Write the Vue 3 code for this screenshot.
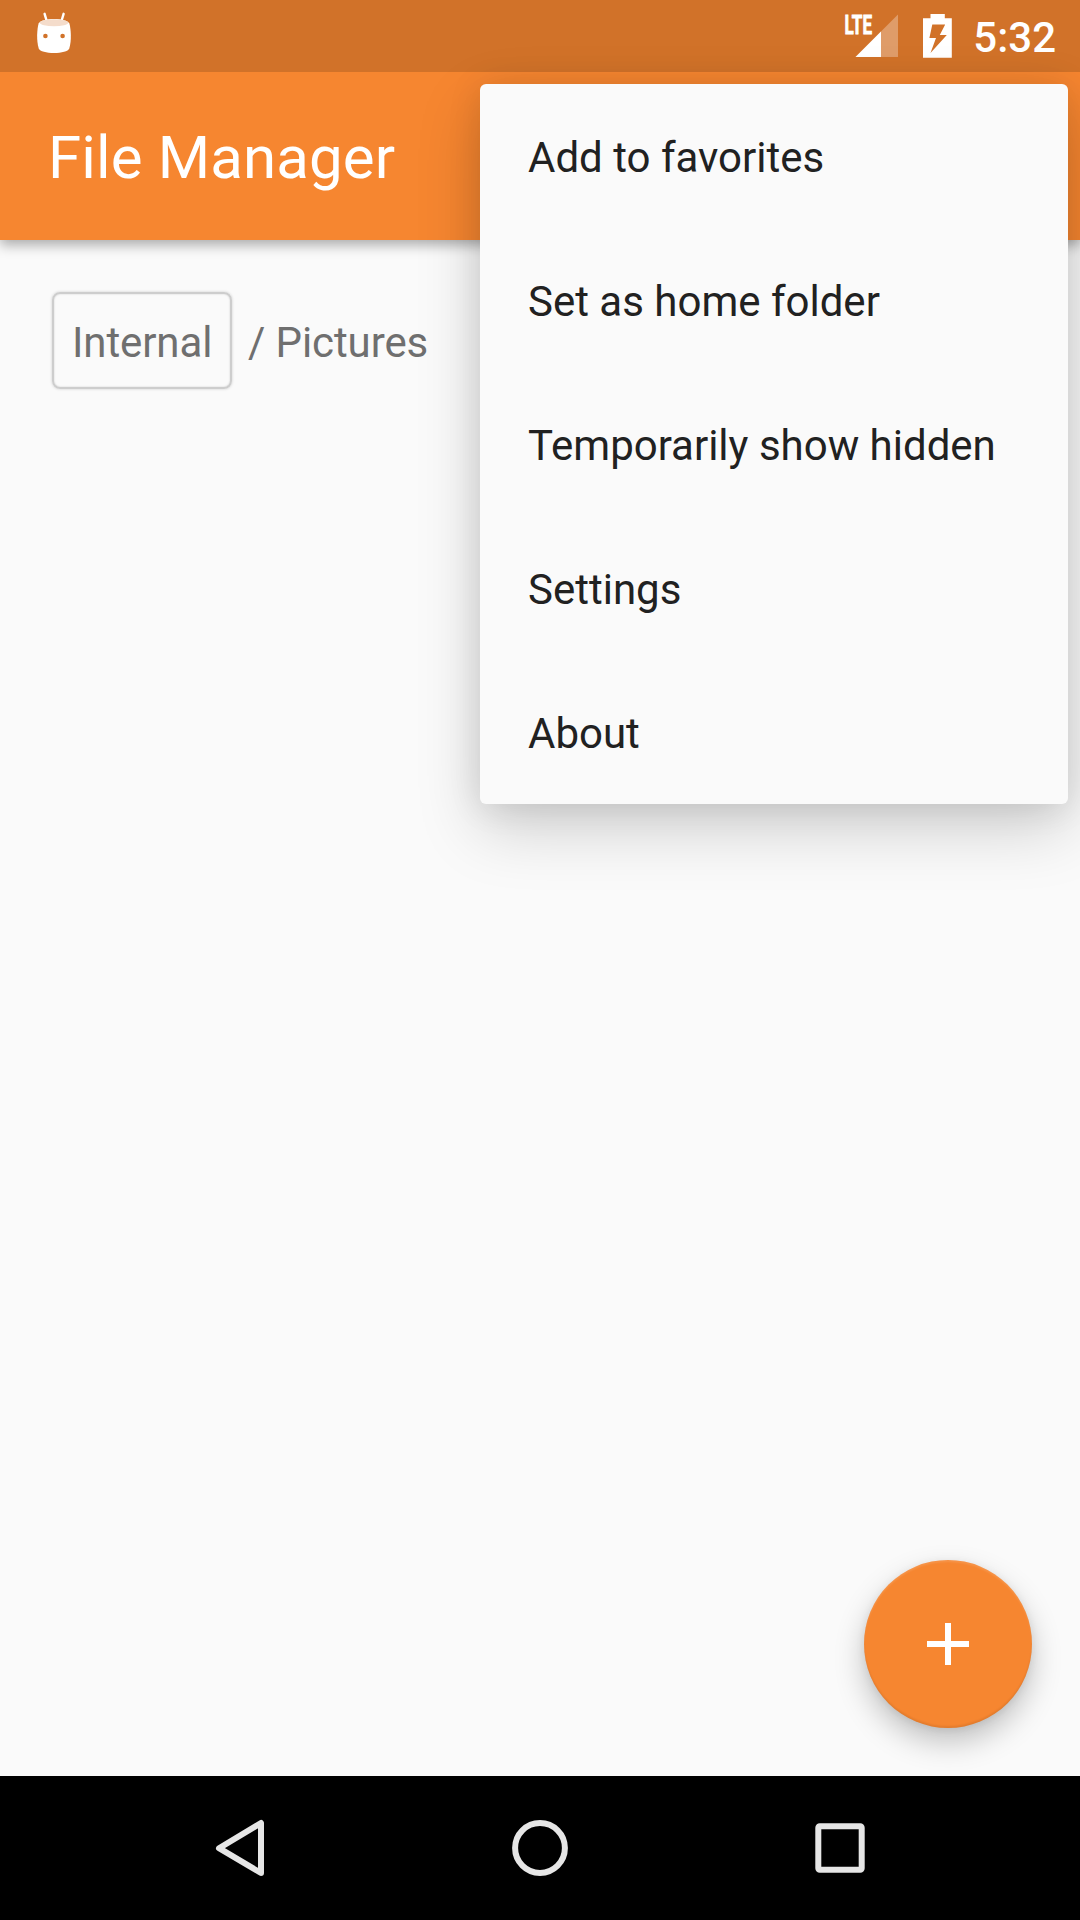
<script setup>
const menuItems = [
  'Add to favorites',
  'Set as home folder',
  'Temporarily show hidden',
  'Settings',
  'About',
]
</script>

<template>
  <div class="screen">
    <header class="status-bar">
      <svg class="marshmallow" width="40" height="44" viewBox="34 11 40 44">
        <path d="M47 22L44.6 13.8M61.2 22L63.6 13.8" stroke="#fff" stroke-width="2.4" stroke-linecap="round" />
        <path d="M38.6 23.5C37 29 36.3 41 38.7 48.3C39.8 51.6 46.5 53 54 53C61.5 53 68.2 51.6 69.3 48.3C71.7 41 71 29 69.4 23.5C68 20.5 61 19 54 19C47 19 40 20.5 38.6 23.5Z" fill="#fff" />
        <ellipse cx="54" cy="22.8" rx="14.2" ry="3.5" fill="#f4dccb" />
        <circle cx="45.4" cy="36" r="2.3" fill="#d17229" />
        <circle cx="62.6" cy="36" r="2.3" fill="#d17229" />
      </svg>
      <div class="indicators">
        <svg class="signal" width="60" height="54" viewBox="840 5 60 54">
          <path d="M898 14.5V57H855.5Z" fill="#fff" fill-opacity=".3" />
          <path d="M881 31.5V57H855.5Z" fill="#fff" />
          <text x="844.5" y="33.8" class="lte" textLength="27.5" lengthAdjust="spacingAndGlyphs">LTE</text>
        </svg>
        <svg class="battery" width="29" height="44" viewBox="923 14 29 44">
          <path d="M930.5 14H944.8V18.2H951.8V57.8H923V18.2H930.5ZM932.3 24.5L929.4 38H936L930.5 53L946.8 35H939.8L945.2 24.5Z" fill="#fff" fill-rule="evenodd" />
        </svg>
        <span class="clock">5:32</span>
      </div>
    </header>

    <div class="app-bar">
      <h1 class="title">File Manager</h1>
    </div>

    <main class="content">
      <nav class="breadcrumb">
        <span class="crumb-button">Internal</span>
        <span class="crumb">/ Pictures</span>
      </nav>
      <button class="fab" aria-label="Add">
        <svg width="42" height="42" viewBox="0 0 42 42">
          <path d="M21 0V42M0 21H42" stroke="#fff" stroke-width="6" />
        </svg>
      </button>
    </main>

    <footer class="nav-bar">
      <div class="nav-item">
        <svg width="60" height="60" viewBox="0 0 60 60">
          <path d="M51 5V55L9 30.2Z" class="nav-stroke" />
        </svg>
      </div>
      <div class="nav-item">
        <svg width="60" height="60" viewBox="0 0 60 60">
          <circle cx="30" cy="30" r="24.9" class="nav-stroke" />
        </svg>
      </div>
      <div class="nav-item">
        <svg width="60" height="60" viewBox="0 0 60 60">
          <rect x="8.3" y="8.3" width="43.4" height="43.4" rx="1.5" class="nav-stroke" />
        </svg>
      </div>
    </footer>

    <ul class="menu">
      <li v-for="item in menuItems" :key="item" class="menu-item">{{ item }}</li>
    </ul>
  </div>
</template>

<style>
body {
  margin: 0;
}
</style>

<style scoped>
.screen {
  position: relative;
  display: flex;
  flex-direction: column;
  width: 1080px;
  height: 1920px;
  overflow: hidden;
  background: #fafafa;
  font-family: Roboto, 'Liberation Sans', sans-serif;
}

.status-bar {
  display: flex;
  justify-content: space-between;
  flex: none;
  box-sizing: border-box;
  height: 72px;
  padding: 0 24px 0 34px;
  background: #d17229;
  z-index: 2;
}

.marshmallow {
  margin-top: 11px;
}

.indicators {
  display: flex;
  align-items: flex-start;
}

.signal {
  margin: 5px 23px 0 0;
}

.lte {
  font-size: 25.5px;
  font-weight: 700;
  fill: #fff;
  stroke: #fff;
  stroke-width: 0.8px;
}

.battery {
  margin: 14px 21px 0 0;
}

.clock {
  color: #fff;
  font-size: 42px;
  font-weight: 500;
  line-height: 75px;
}

.app-bar {
  display: flex;
  align-items: center;
  flex: none;
  height: 168px;
  padding-left: 48px;
  background: #f68630;
  box-shadow: 0 5px 12px rgba(0, 0, 0, 0.32);
  z-index: 1;
}

.title {
  margin: 4px 0 0;
  color: #fff;
  font-size: 60px;
  font-weight: 400;
  letter-spacing: 0.12px;
  line-height: 70px;
}

.content {
  position: relative;
  flex: 1;
  padding: 52px 52px 0;
}

.breadcrumb {
  display: flex;
  align-items: flex-start;
  gap: 16px;
  color: #6f6f6f;
  font-size: 42px;
  letter-spacing: -0.1px;
  line-height: 50px;
}

.crumb-button {
  box-sizing: border-box;
  width: 180px;
  height: 97px;
  padding: 24px 0 0 18px;
  border: 2px solid #cdcdcd;
  border-radius: 8px;
  box-shadow: 0 0 3px rgba(0, 0, 0, 0.18), inset 0 0 2px rgba(0, 0, 0, 0.18);
}

.crumb {
  padding-top: 26px;
}

.fab {
  position: absolute;
  right: 48px;
  bottom: 48px;
  display: flex;
  align-items: center;
  justify-content: center;
  width: 168px;
  height: 168px;
  padding: 0;
  border: 0;
  border-radius: 50%;
  background: #f68630;
  box-shadow: 0 14px 30px rgba(0, 0, 0, 0.23), 0 2px 8px rgba(0, 0, 0, 0.08),
    inset 0 -2px 2px rgba(0, 0, 0, 0.08), inset 0 2px 2px rgba(255, 255, 255, 0.12);
}

.nav-bar {
  display: flex;
  flex: none;
  box-sizing: border-box;
  height: 144px;
  padding: 0 90px;
  background: #000;
}

.nav-item {
  display: flex;
  align-items: center;
  justify-content: center;
  flex: 1;
}

.nav-stroke {
  fill: none;
  stroke: #e6e6e6;
  stroke-width: 6;
  stroke-linejoin: round;
}

.menu {
  position: absolute;
  top: 84px;
  right: 12px;
  z-index: 3;
  width: 588px;
  margin: 0;
  padding: 0;
  border-radius: 6px;
  background: #fafafa;
  box-shadow: 0 24px 64px rgba(0, 0, 0, 0.18), 0 2px 34px rgba(0, 0, 0, 0.1);
  list-style: none;
}

.menu-item {
  display: flex;
  align-items: center;
  box-sizing: border-box;
  height: 144px;
  padding: 2px 0 0 48px;
  color: #212121;
  font-size: 42px;
}
</style>
